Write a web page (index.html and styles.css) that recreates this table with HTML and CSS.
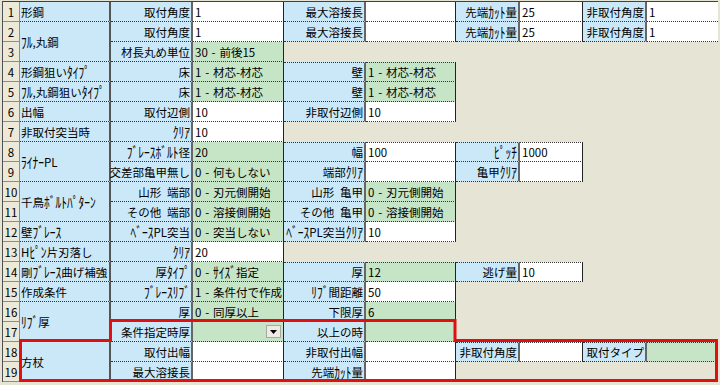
FILE: index.html
```html
<!DOCTYPE html>
<html lang="ja">
<head>
<meta charset="utf-8">
<title>Sheet</title>
<link rel="stylesheet" href="styles.css">
</head>
<body>
<div class="wrap">
  <div class="sheet">
    <!-- row 1 -->
    <div class="c n">1</div>
    <div class="c h"><span>形鋼</span></div>
    <div class="c l"><span>取付角度</span></div>
    <div class="c v"><span>1</span></div>
    <div class="c l"><span>最大溶接長</span></div>
    <div class="c v"></div>
    <div class="c l"><span>先端<span class="k">ｶｯﾄ</span>量</span></div>
    <div class="c v"><span>25</span></div>
    <div class="c l"><span>非取付角度</span></div>
    <div class="c v last"><span>1</span></div>
    <!-- row 2 -->
    <div class="c n">2</div>
    <div class="c h h2"><span><span class="k">ﾌﾙ</span>,丸鋼</span></div>
    <div class="c l"><span>取付角度</span></div>
    <div class="c v"><span>1</span></div>
    <div class="c l"><span>最大溶接長</span></div>
    <div class="c v"></div>
    <div class="c l"><span>先端<span class="k">ｶｯﾄ</span>量</span></div>
    <div class="c v"><span>25</span></div>
    <div class="c l"><span>非取付角度</span></div>
    <div class="c v last"><span>1</span></div>
    <!-- row 3 -->
    <div class="c n">3</div>
    <div class="c l"><span>材長丸め単位</span></div>
    <div class="c v g"><span>30&#8196;-&#8196;前後15</span></div>
    <div class="e s6"></div>
    <!-- row 4 -->
    <div class="c n">4</div>
    <div class="c h"><span>形鋼狙い<span class="k">ﾀｲﾌﾟ</span></span></div>
    <div class="c l"><span>床</span></div>
    <div class="c v g"><span>1&#8196;-&#8196;材芯-材芯</span></div>
    <div class="c l t"><span>壁</span></div>
    <div class="c v g t"><span>1&#8196;-&#8196;材芯-材芯</span></div>
    <div class="e s4"></div>
    <!-- row 5 -->
    <div class="c n">5</div>
    <div class="c h"><span><span class="k">ﾌﾙ</span>,丸鋼狙い<span class="k">ﾀｲﾌﾟ</span></span></div>
    <div class="c l"><span>床</span></div>
    <div class="c v g"><span>1&#8196;-&#8196;材芯-材芯</span></div>
    <div class="c l"><span>壁</span></div>
    <div class="c v g"><span>1&#8196;-&#8196;材芯-材芯</span></div>
    <div class="e s4"></div>
    <!-- row 6 -->
    <div class="c n">6</div>
    <div class="c h"><span>出幅</span></div>
    <div class="c l"><span>取付辺側</span></div>
    <div class="c v"><span>10</span></div>
    <div class="c l"><span>非取付辺側</span></div>
    <div class="c v"><span>10</span></div>
    <div class="e s4"></div>
    <!-- row 7 -->
    <div class="c n">7</div>
    <div class="c h"><span>非取付突当時</span></div>
    <div class="c l"><span><span class="k">ｸﾘｱ</span></span></div>
    <div class="c v"><span>10</span></div>
    <div class="e s6"></div>
    <!-- row 8 -->
    <div class="c n">8</div>
    <div class="c h h2"><span><span class="k">ﾗｲﾅｰ</span>PL</span></div>
    <div class="c l"><span><span class="k">ﾌﾞﾚｰｽﾎﾞﾙﾄ</span>径</span></div>
    <div class="c v g"><span>20</span></div>
    <div class="c l t"><span>幅</span></div>
    <div class="c v t"><span>100</span></div>
    <div class="c l t"><span><span class="k">ﾋﾟｯﾁ</span></span></div>
    <div class="c v t"><span>1000</span></div>
    <div class="e s2"></div>
    <!-- row 9 -->
    <div class="c n">9</div>
    <div class="c l"><span>交差部亀甲無し</span></div>
    <div class="c v g"><span>0&#8196;-&#8196;何もしない</span></div>
    <div class="c l"><span>端部<span class="k">ｸﾘｱ</span></span></div>
    <div class="c v"></div>
    <div class="c l"><span>亀甲<span class="k">ｸﾘｱ</span></span></div>
    <div class="c v"></div>
    <div class="e s2"></div>
    <!-- row 10 -->
    <div class="c n">10</div>
    <div class="c h h2"><span>千鳥<span class="k">ﾎﾞﾙﾄﾊﾟﾀｰﾝ</span></span></div>
    <div class="c l"><span>山形&ensp;端部</span></div>
    <div class="c v g"><span>0&#8196;-&#8196;刃元側開始</span></div>
    <div class="c l"><span>山形&ensp;亀甲</span></div>
    <div class="c v g"><span>0&#8196;-&#8196;刃元側開始</span></div>
    <div class="e s4"></div>
    <!-- row 11 -->
    <div class="c n">11</div>
    <div class="c l"><span>その他&ensp;端部</span></div>
    <div class="c v g"><span>0&#8196;-&#8196;溶接側開始</span></div>
    <div class="c l"><span>その他&ensp;亀甲</span></div>
    <div class="c v g"><span>0&#8196;-&#8196;溶接側開始</span></div>
    <div class="e s4"></div>
    <!-- row 12 -->
    <div class="c n">12</div>
    <div class="c h"><span>壁<span class="k">ﾌﾞﾚｰｽ</span></span></div>
    <div class="c l"><span><span class="k">ﾍﾞｰｽ</span>PL突当</span></div>
    <div class="c v g"><span>0&#8196;-&#8196;突当しない</span></div>
    <div class="c l"><span><span class="k">ﾍﾞｰｽ</span>PL突当<span class="k">ｸﾘｱ</span></span></div>
    <div class="c v"><span>10</span></div>
    <div class="e s4"></div>
    <!-- row 13 -->
    <div class="c n">13</div>
    <div class="c h"><span>H<span class="k">ﾋﾟﾝ</span>片刃落し</span></div>
    <div class="c l"><span><span class="k">ｸﾘｱ</span></span></div>
    <div class="c v"><span>20</span></div>
    <div class="e s6"></div>
    <!-- row 14 -->
    <div class="c n">14</div>
    <div class="c h"><span>剛<span class="k">ﾌﾞﾚｰｽ</span>曲げ補強</span></div>
    <div class="c l"><span>厚<span class="k">ﾀｲﾌﾟ</span></span></div>
    <div class="c v g"><span>0&#8196;-&#8196;<span class="k">ｻｲｽﾞ</span>指定</span></div>
    <div class="c l t"><span>厚</span></div>
    <div class="c v g t"><span>12</span></div>
    <div class="c l t"><span>逃げ量</span></div>
    <div class="c v t"><span>10</span></div>
    <div class="e s2"></div>
    <!-- row 15 -->
    <div class="c n">15</div>
    <div class="c h"><span>作成条件</span></div>
    <div class="c l"><span><span class="k">ﾌﾞﾚｰｽﾘﾌﾞ</span></span></div>
    <div class="c v g"><span>1&#8196;-&#8196;条件付で作成</span></div>
    <div class="c l"><span><span class="k">ﾘﾌﾞ</span>間距離</span></div>
    <div class="c v"><span>50</span></div>
    <div class="e s4"></div>
    <!-- row 16 -->
    <div class="c n">16</div>
    <div class="c h h2"><span><span class="k">ﾘﾌﾞ</span>厚</span></div>
    <div class="c l"><span>厚</span></div>
    <div class="c v g"><span>0&#8196;-&#8196;同厚以上</span></div>
    <div class="c l"><span>下限厚</span></div>
    <div class="c v g"><span>6</span></div>
    <div class="e s4"></div>
    <!-- row 17 -->
    <div class="c n">17</div>
    <div class="c l"><span>条件指定時厚</span></div>
    <div class="c v g"><span class="dd"><svg width="7" height="4" viewBox="0 0 7 4"><path d="M0 0H7L3.5 4Z" fill="#000"/></svg></span></div>
    <div class="c l"><span>以上の時</span></div>
    <div class="c v g"></div>
    <div class="e s4"></div>
    <!-- row 18 -->
    <div class="c n">18</div>
    <div class="c h h2"><span>方杖</span></div>
    <div class="c l"><span>取付出幅</span></div>
    <div class="c v"></div>
    <div class="c l"><span>非取付出幅</span></div>
    <div class="c v"></div>
    <div class="c l t"><span>非取付角度</span></div>
    <div class="c v t"></div>
    <div class="c l t"><span>取付タイプ</span></div>
    <div class="c v g t last"></div>
    <!-- row 19 -->
    <div class="c n">19</div>
    <div class="c l"><span>最大溶接長</span></div>
    <div class="c v"></div>
    <div class="c l"><span>先端<span class="k">ｶｯﾄ</span>量</span></div>
    <div class="c v"></div>
    <div class="e s4"></div>
  </div>
  <svg class="hl" width="720" height="385" viewBox="0 0 720 385">
    <polygon points="110.5,320.5 455,320.5 455,340.5 716.5,340.5 716.5,380.5 20.5,380.5 20.5,340.5 110.5,340.5" fill="none" stroke="#e01010" stroke-width="3"/>
  </svg>
</div>
</body>
</html>
```

FILE: styles.css
```css
* {
  box-sizing: border-box;
}

html,
body {
  margin: 0;
  padding: 0;
}

body {
  width: 720px;
  height: 385px;
  overflow: hidden;
  background: #e5e4d5;
  color: #000;
  font-family: "Noto Sans CJK JP", "Noto Sans", sans-serif;
  font-size: 11.5px;
}

.wrap {
  position: relative;
  width: 720px;
  height: 385px;
  padding: 1px 0 0 2px;
}

.sheet {
  display: grid;
  grid-template-columns: 17px 91px 82px 91px 82px 90px 64px 63px 64px 71px;
  grid-template-rows: repeat(19, 20px);
  width: 716px;
  border-top: 1px solid #404040;
  border-left: 1px solid #505050;
}

.c {
  display: flex;
  align-items: center;
  min-width: 0;
  white-space: nowrap;
  line-height: 14px;
  border-bottom: 1px dotted #333;
}

.k {
  display: inline-block;
  transform: scaleY(1.3);
  transform-origin: 50% 60%;
}

.n {
  justify-content: center;
  background: #ece9d8;
  border-right: 1px solid #8e8d80;
  border-bottom: 1px solid #8e8d80;
}

.h {
  grid-column: 2;
  background: #cbe8f9;
  padding-left: 1px;
  border-right: 2px solid #555;
}

.h2 {
  grid-row: span 2;
}

.l {
  justify-content: flex-end;
  background: #cbe8f9;
  padding-right: 1px;
  border-right: 2px solid #666;
}

.v {
  background: #fff;
  padding-left: 2px;
  border-right: 1px solid #222;
}

.g {
  background: #c6e4c6;
}

.last {
  border-right: none;
}

.t {
  border-top: 1px dotted #333;
}

.e {
  background: transparent;
}

.s2 {
  grid-column: span 2;
}

.s4 {
  grid-column: span 4;
}

.s6 {
  grid-column: span 6;
}

.dd {
  display: flex;
  align-items: center;
  justify-content: center;
  width: 15px;
  height: 13px;
  margin-left: auto;
  margin-right: 2px;
  background: #ecebe6;
  border: 1px solid #a8a8a0;
}

.hl {
  position: absolute;
  left: 0;
  top: 0;
  pointer-events: none;
}
```
